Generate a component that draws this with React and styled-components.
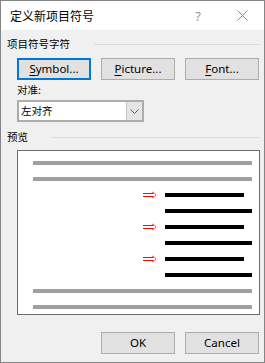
import React from "react";
import styled, { createGlobalStyle } from "styled-components";

const GlobalStyle = createGlobalStyle`
  html, body {
    margin: 0;
    padding: 0;
    background: #f0f0f0;
  }
  * {
    box-sizing: border-box;
  }
`;

const cjk = `"Noto Sans CJK SC", "Noto Sans", sans-serif`;
const latin = `"Noto Sans", "Liberation Sans", sans-serif`;

const Window = styled.div`
  width: 265px;
  height: 363px;
  border: 1px solid #858585;
  background: #f0f0f0;
  display: flex;
  flex-direction: column;
  font-family: ${cjk};
  color: #000;
  overflow: hidden;
`;

const TitleBar = styled.div`
  height: 29px;
  flex-shrink: 0;
  background: #fff;
  display: flex;
  align-items: center;
  padding-left: 9px;
`;

const Title = styled.span`
  font-size: 12px;
  line-height: 14px;
  flex: 1;
`;

const HelpGlyph = styled.span`
  font-family: ${latin};
  font-size: 13px;
  color: #9a9a9a;
  width: 14px;
  text-align: center;
  margin-right: 32px;
`;

const CloseIcon = styled.svg`
  width: 11px;
  height: 11px;
  margin-right: 16px;
  margin-bottom: 1px;
`;

const Body = styled.div`
  flex: 1;
  display: flex;
  flex-direction: column;
  padding: 7px 5px 0 6px;
`;

const GroupHeader = styled.div`
  display: flex;
  align-items: center;
  height: 14px;
  margin-top: ${p => p.$top || 0}px;
`;

const GroupLabel = styled.span`
  font-size: 10.5px;
  line-height: 14px;
  white-space: nowrap;
`;

const GroupRule = styled.div`
  flex: 1;
  height: 1px;
  background: #dcdcdc;
  margin-left: ${p => p.$gap}px;
`;

const Indented = styled.div`
  padding-left: 10px;
  display: flex;
  flex-direction: column;
`;

const ButtonRow = styled.div`
  display: flex;
  gap: 10px;
  margin-top: ${p => p.$top}px;
  justify-content: ${p => (p.$end ? "flex-end" : "flex-start")};
`;

const Button = styled.button`
  width: 74px;
  height: 22px;
  padding: 0;
  margin: 0;
  background: #e1e1e1;
  border: ${p => (p.$focused ? "2px solid #0078d7" : "1px solid #adadad")};
  font-family: ${latin};
  font-size: 11.5px;
  color: #000;
  line-height: 1;
  display: flex;
  align-items: center;
  justify-content: center;
  u {
    text-decoration: underline;
    text-underline-offset: 2px;
  }
`;

const FieldLabel = styled.span`
  font-size: 10.5px;
  line-height: 14px;
  margin-top: 3px;
`;

const Combo = styled.div`
  margin-top: 3px;
  width: 127px;
  height: 22px;
  border: 2px solid #adadad;
  background: #fff;
  display: flex;
`;

const ComboText = styled.span`
  flex: 1;
  font-size: 10.5px;
  line-height: 18px;
  padding-left: 2px;
`;

const ComboArrow = styled.div`
  width: 16px;
  background: #e5e5e5;
  border-left: 1px solid #c8c8c8;
  display: flex;
  align-items: center;
  justify-content: center;
`;

const PreviewBox = styled.div`
  margin-top: 6px;
  width: 243px;
  height: 165px;
  border: 1px solid #6d6d6d;
  background: #fff;
  display: flex;
  flex-direction: column;
  gap: 12px;
  padding: 10px 7px 0 15px;
`;

const LineRow = styled.div`
  height: 4px;
  display: flex;
  align-items: center;
  padding-left: ${p => p.$indent || 0}px;
  padding-right: ${p => p.$trim || 0}px;
`;

const Bar = styled.div`
  flex: 1;
  height: 4px;
  background: ${p => (p.$dark ? "#000" : "#a0a0a0")};
`;

const BulletArrow = styled.svg`
  width: 14px;
  height: 8px;
  flex-shrink: 0;
  margin-left: -22px;
  margin-right: 8px;
`;

const Footer = styled(ButtonRow)`
  padding-right: 0;
`;

function Arrow() {
  return (
    <BulletArrow viewBox="0 0 14 8">
      <path d="M0 2.5H10.5M0 5.5H10.5" stroke="#ff0000" strokeWidth="1" fill="none" />
      <path d="M9 1Q12 2.3 13.2 4Q12 5.7 9 7" stroke="#ff4060" strokeWidth="1" fill="none" />
    </BulletArrow>
  );
}

const previewLines = [
  { kind: "gray" },
  { kind: "gray" },
  { kind: "bullet" },
  { kind: "sub" },
  { kind: "bullet" },
  { kind: "sub" },
  { kind: "bullet" },
  { kind: "sub" },
  { kind: "gray" },
  { kind: "gray" },
];

export default function App() {
  return (
    <>
      <GlobalStyle />
      <Window>
        <TitleBar>
          <Title>定义新项目符号</Title>
          <HelpGlyph>?</HelpGlyph>
          <CloseIcon viewBox="0 0 11 11">
            <path d="M0.5 0.5L10.5 10.5M10.5 0.5L0.5 10.5" stroke="#8a8a8a" strokeWidth="1" />
          </CloseIcon>
        </TitleBar>
        <Body>
          <GroupHeader>
            <GroupLabel>项目符号字符</GroupLabel>
            <GroupRule $gap={24} />
          </GroupHeader>
          <Indented>
            <ButtonRow $top={7}>
              <Button $focused>
                <span><u>S</u>ymbol...</span>
              </Button>
              <Button>
                <span><u>P</u>icture...</span>
              </Button>
              <Button>
                <span><u>F</u>ont...</span>
              </Button>
            </ButtonRow>
            <FieldLabel>对准:</FieldLabel>
            <Combo>
              <ComboText>左对齐</ComboText>
              <ComboArrow>
                <svg width="9" height="5" viewBox="0 0 9 5">
                  <path d="M0.5 0.5L4.5 4.5L8.5 0.5" stroke="#606060" strokeWidth="1" fill="none" />
                </svg>
              </ComboArrow>
            </Combo>
          </Indented>
          <GroupHeader $top={8}>
            <GroupLabel>预览</GroupLabel>
            <GroupRule $gap={23} />
          </GroupHeader>
          <Indented>
            <PreviewBox>
              {previewLines.map((l, i) =>
                l.kind === "gray" ? (
                  <LineRow key={i}>
                    <Bar />
                  </LineRow>
                ) : l.kind === "bullet" ? (
                  <LineRow key={i} $indent={132} $trim={8}>
                    <Arrow />
                    <Bar $dark />
                  </LineRow>
                ) : (
                  <LineRow key={i} $indent={132}>
                    <Bar $dark />
                  </LineRow>
                )
              )}
            </PreviewBox>
            <Footer $top={17} $end>
              <Button>OK</Button>
              <Button>Cancel</Button>
            </Footer>
          </Indented>
        </Body>
      </Window>
    </>
  );
}
